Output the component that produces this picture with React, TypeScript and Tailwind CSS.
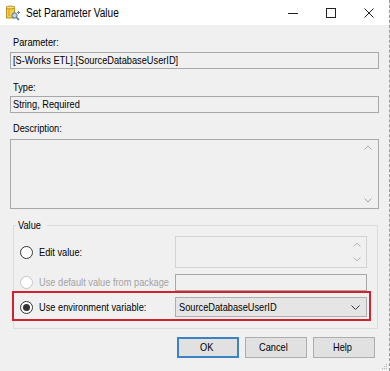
import React from 'react';

const font = { fontFamily: '"Liberation Sans", Arial, sans-serif' };

// the dialog font is narrow; squeeze regular Liberation Sans to match
function T({ children, className = '' }: { children: React.ReactNode; className?: string }) {
  return <span className={`inline-block origin-left scale-x-[0.84] whitespace-nowrap ${className}`}>{children}</span>;
}

function Radio({ checked = false, disabled = false }: { checked?: boolean; disabled?: boolean }) {
  return (
    <span
      className={`flex h-[13px] w-[13px] shrink-0 items-center justify-center rounded-full border bg-white ${
        disabled ? 'border-[#c4c4c4]' : 'border-[#333333]'
      }`}
    >
      {checked && <span className="h-[7px] w-[7px] rounded-full bg-[#333333]" />}
    </span>
  );
}

function ScrollArrows({ color = '#a6a6a6' }: { color?: string }) {
  return (
    <div className="flex h-full w-[14px] flex-col items-center justify-between py-[5px]">
      <svg width="8" height="5" viewBox="0 0 8 5"><path d="M0.5 4.5 L4 1 L7.5 4.5" fill="none" stroke={color} strokeWidth="1" /></svg>
      <svg width="8" height="5" viewBox="0 0 8 5"><path d="M0.5 0.5 L4 4 L7.5 0.5" fill="none" stroke={color} strokeWidth="1" /></svg>
    </div>
  );
}

function AppIcon() {
  return (
    <svg width="16" height="16" viewBox="0 0 16 16">
      <rect x="1.5" y="2" width="8" height="11" fill="#f3cd4b" stroke="#b88f22" />
      <ellipse cx="5.5" cy="2.5" rx="4" ry="1.5" fill="#fbe27e" stroke="#b88f22" />
      <rect x="3" y="5" width="2" height="6" fill="#e2b530" />
      <path d="M8 9 L14 15" stroke="#4f6e8f" strokeWidth="1.6" />
      <circle cx="9.5" cy="10.5" r="2.6" fill="#c7d4e2" stroke="#4f6e8f" strokeWidth="1" />
      <path d="M12 7.5 L15 7.5 M13.5 6 L13.5 9" stroke="#6b7f95" strokeWidth="1" />
    </svg>
  );
}

export default function App() {
  return (
    <div className="relative flex h-[371px] w-[390px] flex-col overflow-hidden border-r border-dashed border-[#9a9a9a] bg-[#f0f0f0] text-[11px] text-black" style={font}>
      {/* Title bar */}
      <div className="flex h-[25px] shrink-0 items-center bg-white">
        <div className="ml-[5px] flex h-[16px] w-[16px] items-center justify-center">
          <AppIcon />
        </div>
        <T className="ml-[5px] text-[12px] leading-none">Set Parameter Value</T>
        <div className="ml-auto mr-[1px] flex h-full">
          <div className="flex w-[38px] items-center justify-center">
            <svg width="10" height="10" viewBox="0 0 10 10"><path d="M0 5.5 H10" stroke="#222" strokeWidth="1" /></svg>
          </div>
          <div className="flex w-[38px] items-center justify-center">
            <svg width="10" height="10" viewBox="0 0 10 10"><rect x="0.5" y="0.5" width="9" height="9" fill="none" stroke="#222" strokeWidth="1" /></svg>
          </div>
          <div className="flex w-[38px] items-center justify-center">
            <svg width="10" height="10" viewBox="0 0 10 10"><path d="M0.5 0.5 L9.5 9.5 M9.5 0.5 L0.5 9.5" stroke="#222" strokeWidth="1" /></svg>
          </div>
        </div>
      </div>

      {/* Body */}
      <div className="flex min-w-0 flex-col px-[10px]">
        <label className="ml-[3px] mt-[10px] h-[14px] leading-[14px]"><T>Parameter:</T></label>
        <div className="mt-[3px] flex h-[17px] items-center border border-[#a8a8a8] px-[2px]"><T>[S-Works ETL].[SourceDatabaseUserID]</T></div>

        <label className="ml-[3px] mt-[11px] h-[14px] leading-[14px]"><T>Type:</T></label>
        <div className="mt-[2px] flex h-[17px] items-center border border-[#a8a8a8] px-[2px]"><T>String, Required</T></div>

        <label className="ml-[3px] mt-[8px] h-[14px] leading-[14px]"><T>Description:</T></label>
        <div className="mt-[4px] flex h-[70px] justify-end border border-[#a8a8a8] pr-[3px]">
          <ScrollArrows />
        </div>

        <fieldset className="ml-[3px] mr-[1px] mt-[9px] min-w-0 border border-[#dcdcdc] pb-[11px]">
          <legend className="ml-[2px] h-[14px] px-[2px] leading-[14px]"><T>Value</T></legend>

          <div className="mt-[4px] flex h-[32px] items-center pr-[10px]">
            <div className="flex min-w-0 flex-1 items-center gap-[6px] pl-[6px]">
              <Radio />
              <T>Edit value:</T>
            </div>
            <div className="flex h-full w-[192px] shrink-0 justify-end border border-[#d4d4d4] pr-[2px]">
              <ScrollArrows color="#b4b4b4" />
            </div>
          </div>

          <div className="mt-[6px] flex h-[17px] items-center pr-[10px]">
            <div className="flex min-w-0 flex-1 items-center gap-[6px] pl-[6px] text-[#a3a3a3]">
              <Radio disabled />
              <T>Use default value from package</T>
            </div>
            <div className="h-full w-[192px] shrink-0 border border-[#a8a8a8]" />
          </div>

          <div className="relative mt-[6px] flex h-[20px] items-center pr-[10px]">
            <span className="pointer-events-none absolute -bottom-[4px] -left-[2px] right-[6px] -top-[6px] border-2 border-[#d0222f]" />
            <div className="flex min-w-0 flex-1 items-center gap-[6px] pl-[6px]">
              <Radio checked />
              <T>Use environment variable:</T>
            </div>
            <div className="flex h-full w-[192px] shrink-0 items-center justify-between border border-[#adadad] bg-[#e5e5e5] pl-[3px] pr-[6px]">
              <T>SourceDatabaseUserID</T>
              <svg width="9" height="5" viewBox="0 0 9 5"><path d="M0.5 0.5 L4.5 4.5 L8.5 0.5" fill="none" stroke="#333" strokeWidth="1" /></svg>
            </div>
          </div>
        </fieldset>

        <div className="mr-[4px] mt-[8px] flex justify-end gap-[6px]">
          <button className="h-[21px] w-[62px] border-2 border-[#3d82c4] bg-[#e1e1e1]"><T className="origin-center">OK</T></button>
          <button className="h-[21px] w-[62px] border border-[#adadad] bg-[#e1e1e1]"><T className="origin-center">Cancel</T></button>
          <button className="h-[21px] w-[62px] border border-[#adadad] bg-[#e1e1e1]"><T className="origin-center">Help</T></button>
        </div>
      </div>

      {/* size grip */}
      <svg className="absolute bottom-[1px] right-[1px]" width="8" height="8" viewBox="0 0 8 8">
        <rect x="6" y="2" width="1" height="1" fill="#b0b0b0" />
        <rect x="4" y="4" width="1" height="1" fill="#b0b0b0" />
        <rect x="6" y="4" width="1" height="1" fill="#b0b0b0" />
        <rect x="2" y="6" width="1" height="1" fill="#b0b0b0" />
        <rect x="4" y="6" width="1" height="1" fill="#b0b0b0" />
        <rect x="6" y="6" width="1" height="1" fill="#b0b0b0" />
      </svg>
    </div>
  );
}
